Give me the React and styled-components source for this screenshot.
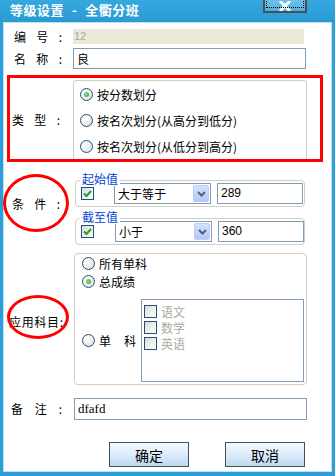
import React from 'react';
import styled, { createGlobalStyle } from 'styled-components';

const GlobalStyle = createGlobalStyle`
  html, body {
    margin: 0;
    padding: 0;
    background: #2a9ed7;
  }
  * {
    box-sizing: border-box;
  }
`;

const cjk = `"Noto Sans CJK SC", "Liberation Sans", sans-serif`;

const Frame = styled.div`
  width: 335px;
  height: 476px;
  display: flex;
  flex-direction: column;
  background: #2a9ed7;
  font-family: ${cjk};
  font-size: 12px;
  color: #000;
  overflow: hidden;
`;

const TitleBar = styled.div`
  height: 22px;
  flex: none;
  display: flex;
  align-items: flex-start;
  background: linear-gradient(#36a8e0, #2a9ad3);
`;

const Title = styled.div`
  margin: 2px 0 0 10px;
  color: #fff;
  font-weight: bold;
  font-size: 13px;
  line-height: 16px;
  letter-spacing: 0.5px;
  white-space: pre;
  display: flex;
  gap: 8px;
`;

const CloseBtn = styled.div`
  margin: -12px 28px 0 auto;
  width: 44px;
  height: 25px;
  border: 2px solid #4b4f55;
  background: linear-gradient(#8fd0f0, #4fb0e0);
  position: relative;
  display: flex;
  justify-content: center;
  align-items: flex-end;
  &::after {
    content: '';
    position: absolute;
    left: 1px;
    right: 1px;
    top: 1px;
    bottom: 3px;
    border: 1px dotted #000;
  }
`;

const Body = styled.div`
  flex: 1;
  margin: 0 3px 4px 3px;
  background: #fff;
  border: 1px solid #bfe0f3;
  padding: 6px 26px 0 10px;
  display: flex;
  flex-direction: column;
`;

const Row = styled.div`
  display: grid;
  grid-template-columns: 59px 1fr;
  align-items: center;
  margin-top: ${p => p.$mt || 0}px;
`;

const Label = styled.div`
  width: ${p => p.$w || 48}px;
  display: flex;
  justify-content: space-between;
  line-height: 14px;
  position: relative;
  margin-left: ${p => p.$ml || 0}px;
`;

const Ellipse = styled.div`
  position: absolute;
  border: 3px solid #f00;
  border-radius: 50%;
  left: ${p => p.$l}px;
  top: ${p => p.$t}px;
  width: ${p => p.$w}px;
  height: ${p => p.$h}px;
  pointer-events: none;
`;

const TextBox = styled.div`
  height: ${p => p.$h || 21}px;
  border: 1px solid #7f9db9;
  background: #fff;
  padding: 2px 3px;
  line-height: 15px;
  font-family: ${p => (p.$serif ? '"Liberation Serif", serif' : cjk)};
  font-size: ${p => (p.$serif ? 13 : 12)}px;
  width: ${p => (p.$w ? p.$w + 'px' : 'auto')};
  margin-right: ${p => p.$mr || 0}px;
`;

const DisabledBox = styled.div`
  height: 15px;
  background: #ece9d8;
  color: #aca899;
  font-family: "Liberation Sans", sans-serif;
  font-size: 11px;
  line-height: 15px;
  padding-left: 1px;
  margin-right: 1px;
`;

const RedBox = styled.div`
  margin: 6px -18px 0 -7px;
  height: 87px;
  border: 3px solid #f00;
  padding: 2px 14px 0 2px;
  display: grid;
  grid-template-columns: 61px 1fr;
  align-items: center;
`;

const GroupBox = styled.div`
  border: 1px solid #d0d0bf;
  border-radius: 4px;
  ${p => p.$open && 'border-bottom: none; border-radius: 4px 4px 0 0;'}
  height: ${p => p.$h}px;
  align-self: ${p => (p.$open ? 'stretch' : 'auto')};
  padding: ${p => p.$pad || '0 0 0 6px'};
  margin-left: ${p => p.$ml || 0}px;
  margin-right: ${p => p.$mr || 0}px;
`;

const OptionRow = styled.div`
  display: flex;
  align-items: center;
  height: ${p => p.$h || 26}px;
  gap: 4px;
`;

const Radio = styled.span`
  width: 13px;
  height: 13px;
  flex: none;
  border-radius: 50%;
  border: 1px solid #1c5180;
  background: radial-gradient(circle at 35% 35%, #fff 0%, #f0efe8 50%, #d8d6cc 100%);
  display: flex;
  align-items: center;
  justify-content: center;
  &::after {
    content: '';
    width: 5px;
    height: 5px;
    border-radius: 50%;
    background: ${p => (p.$on ? 'radial-gradient(circle at 40% 40%, #8ee08e, #21a121)' : 'transparent')};
  }
`;

const Check = styled.span`
  width: 13px;
  height: 13px;
  flex: none;
  border: 1px solid #1c5180;
  background: linear-gradient(135deg, #dcdcd6, #fff);
  display: flex;
  align-items: center;
  justify-content: center;
`;

const Fieldset = styled.div`
  position: relative;
  margin: ${p => p.$mt}px 0 0 2px;
  height: 27px;
  border: 1px solid #d0d0bf;
  border-radius: 4px;
  display: flex;
  align-items: center;
  padding-left: ${p => p.$pl || 5}px;
`;

const Legend = styled.span`
  position: absolute;
  left: 4px;
  top: -9px;
  padding: 0 2px;
  background: #fff;
  color: #0046d5;
  line-height: 14px;
`;

const Select = styled.div`
  margin-left: ${p => p.$ml}px;
  width: 97px;
  height: 21px;
  border: 1px solid #7f9db9;
  display: flex;
  align-items: stretch;
  background: #fff;
`;

const SelectText = styled.span`
  flex: 1;
  padding-left: 3px;
  line-height: 19px;
`;

const SelectBtn = styled.span`
  width: 16px;
  margin: 1px;
  border-radius: 2px;
  background: linear-gradient(#d5e1fd, #b3c8f5);
  border: 1px solid #bccef7;
  display: flex;
  align-items: center;
  justify-content: center;
`;

const SubjectList = styled.div`
  margin-left: ${p => p.$ml}px;
  width: 163px;
  height: 83px;
  border: 1px solid #7f9db9;
  padding: 3px 0 0 2px;
`;

const SubjectItem = styled.div`
  display: flex;
  align-items: center;
  height: 16px;
  gap: 4px;
  color: #aca899;
`;

const ButtonRow = styled.div`
  display: flex;
  justify-content: flex-end;
  gap: 36px;
  margin-top: 22px;
`;

const Button = styled.div`
  width: 80px;
  height: 25px;
  border: 1px solid #4b5056;
  background: linear-gradient(#f2f8fe, #e0edfb 45%, #bcd8f0);
  display: flex;
  align-items: center;
  justify-content: center;
  font-size: 14px;
`;

const Tick = () => (
  <svg width="9" height="9" viewBox="0 0 9 9">
    <path d="M1 4.5 L3.5 7 L8 2" fill="none" stroke="#21a121" strokeWidth="2" />
  </svg>
);

const Chevron = () => (
  <svg width="9" height="6" viewBox="0 0 9 6">
    <path d="M1 1 L4.5 4.5 L8 1" fill="none" stroke="#4d6185" strokeWidth="2" />
  </svg>
);

const Split = ({ parts }) => parts.map((p, i) => <span key={i}>{p}</span>);

const Condition = ({ legend, mt, op, value, selMl, inputMl }) => (
  <Fieldset $mt={mt}>
    <Legend>{legend}</Legend>
    <Check>
      <Tick />
    </Check>
    <Select $ml={selMl}>
      <SelectText>{op}</SelectText>
      <SelectBtn>
        <Chevron />
      </SelectBtn>
    </Select>
    <TextBox $w={86} style={{ marginLeft: inputMl, fontFamily: '"Liberation Sans", sans-serif' }}>
      {value}
    </TextBox>
  </Fieldset>
);

export default function App() {
  return (
    <Frame>
      <GlobalStyle />
      <TitleBar>
        <Title>
          <span>等级设置</span>
          <span>-</span>
          <span>全衢分班</span>
        </Title>
        <CloseBtn>
          <svg width="14" height="10" viewBox="0 0 14 10">
            <path d="M2 0 L12 10 M12 0 L2 10" stroke="#fff" strokeWidth="3" />
          </svg>
        </CloseBtn>
      </TitleBar>
      <Body>
        <Row>
          <Label>
            <Split parts={['编', '号', ':']} />
          </Label>
          <DisabledBox>12</DisabledBox>
        </Row>
        <Row $mt={4}>
          <Label>
            <Split parts={['名', '称', ':']} />
          </Label>
          <TextBox $mr={-1}>良</TextBox>
        </Row>

        <RedBox>
          <Label>
            <Split parts={['类', '型', ':']} />
          </Label>
          <GroupBox $open $mr={-1}>
            <OptionRow>
              <Radio $on />
              按分数划分
            </OptionRow>
            <OptionRow>
              <Radio />
              按名次划分(从高分到低分)
            </OptionRow>
            <OptionRow>
              <Radio />
              按名次划分(从低分到高分)
            </OptionRow>
          </GroupBox>
        </RedBox>

        <Row style={{ alignItems: 'center' }}>
          <Label $ml={-2}>
            <Split parts={['条', '件', ':']} />
            <Ellipse $l={-9} $t={-23} $w={66} $h={58} />
          </Label>
          <div>
            <Condition legend="起始值" mt={18} op="大于等于" value="289" selMl={20} inputMl={6} />
            <Condition legend="截至值" mt={11} op="小于" value="360" selMl={21} inputMl={6} />
          </div>
        </Row>

        <Row style={{ alignItems: 'start' }}>
          <Label $w={54} $ml={-5} style={{ marginTop: 70 }}>
            <Split parts={['应', '用', '科', '目', ':']} />
            <Ellipse $l={-2} $t={-20} $w={62} $h={44} />
          </Label>
          <GroupBox $h={132} $ml={1} $mr={-2} $pad="0 0 0 7px" style={{ marginTop: 8 }}>
            <OptionRow $h={18}>
              <Radio />
              所有单科
            </OptionRow>
            <OptionRow $h={18}>
              <Radio $on />
              总成绩
            </OptionRow>
            <OptionRow $h={97} style={{ alignItems: 'center', paddingTop: 7, paddingBottom: 3 }}>
              <Radio />
              <span style={{ width: 37, display: 'flex', justifyContent: 'space-between' }}>
                <span>单</span>
                <span>科</span>
              </span>
              <SubjectList $ml={1}>
                <SubjectItem>
                  <Check />
                  语文
                </SubjectItem>
                <SubjectItem>
                  <Check />
                  数学
                </SubjectItem>
                <SubjectItem>
                  <Check />
                  英语
                </SubjectItem>
              </SubjectList>
            </OptionRow>
          </GroupBox>
        </Row>

        <Row $mt={13}>
          <Label $ml={-3} $w={51}>
            <Split parts={['备', '注', ':']} />
          </Label>
          <TextBox $serif $h={22} style={{ marginLeft: 1, marginRight: -2 }}>
            dfafd
          </TextBox>
        </Row>

        <ButtonRow>
          <Button>确定</Button>
          <Button>取消</Button>
        </ButtonRow>
      </Body>
    </Frame>
  );
}
